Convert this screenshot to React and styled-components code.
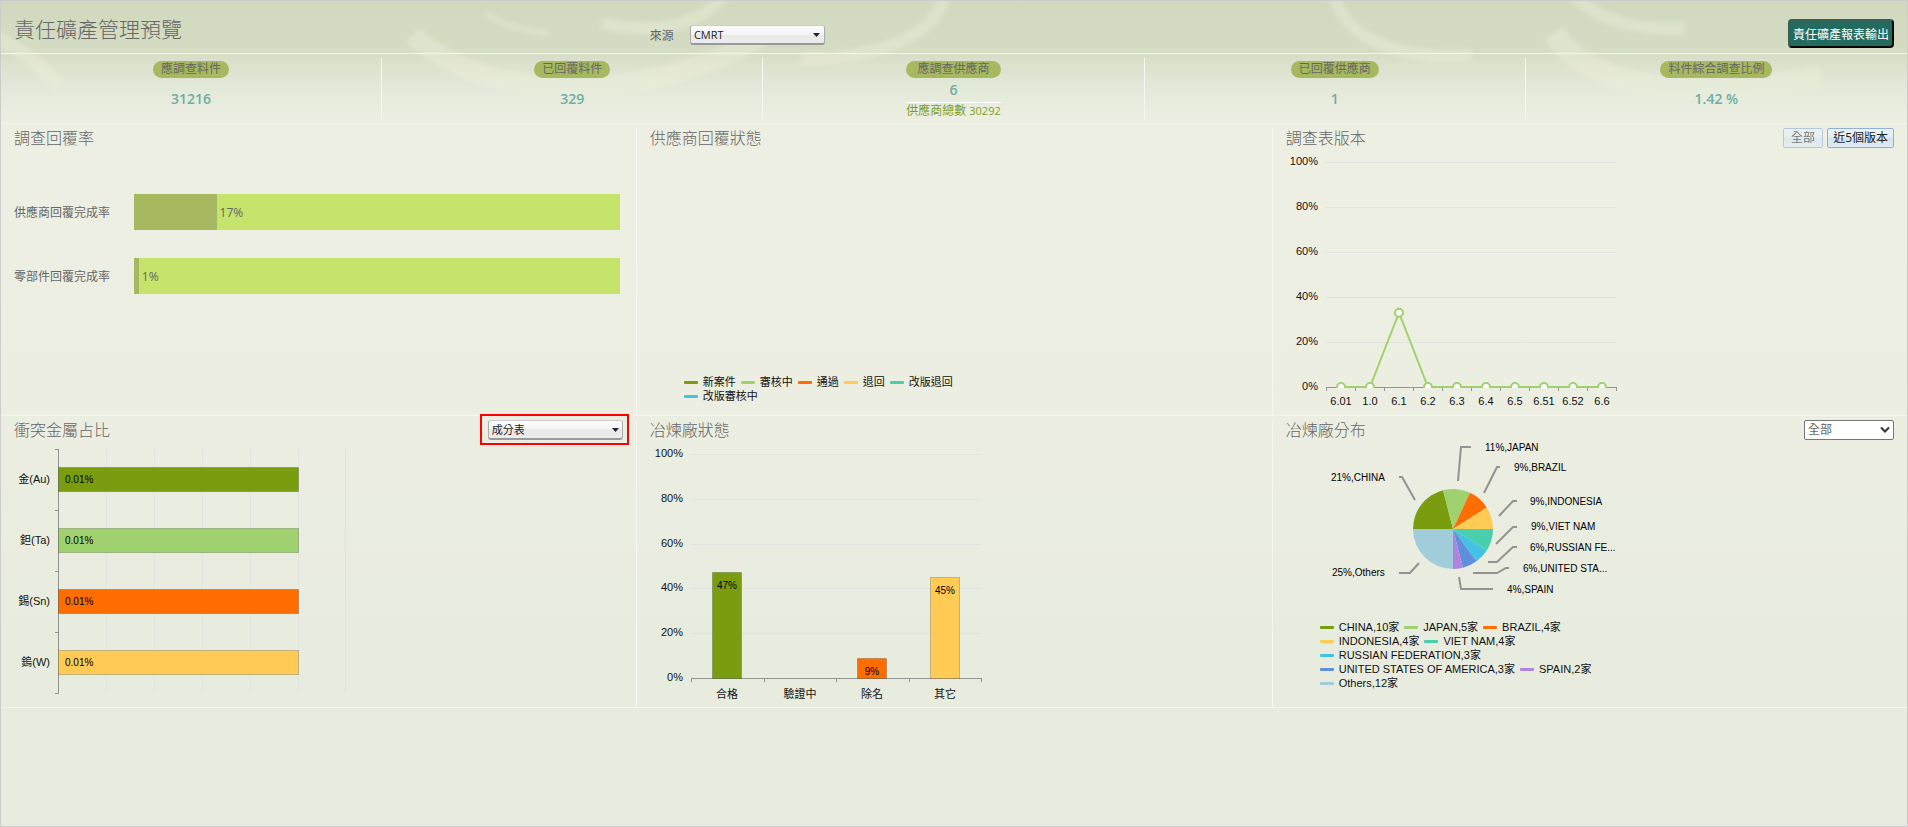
import styled, { createGlobalStyle, css } from "styled-components"

const GlobalStyle = createGlobalStyle`
    * {
        box-sizing: border-box;
    }
    body {
        margin: 0;
        color: #666;
        font-family: "Open Sans", "Noto Sans CJK TC", sans-serif;
        font-size: 12px;
    }
    button, select {
        font-family: inherit;
        font-size: 12px;
    }
`
const Page = styled.div`
    position: relative;
    min-height: 100vh;
    border: 1px solid #ccc;
    background: linear-gradient(
        #d0d9be 0px, #d5dcc4 52px, #dbe0cb 60px, #e2e8d8 85px, #eaeddf 110px,
        #eeefe3 130px, #eeefe3 240px, #ebeee1 400px, #e8ecdf 640px
    );
`
const Swirls = styled.svg`
    position: absolute;
    top: 0;
    left: 0;
    width: 100%;
    height: 122px;
    pointer-events: none;
`
const columns = css`
    display: grid;
    grid-template-columns: 1fr 1fr calc(33.33% - 1px);
`
const Header = styled.header`
    ${columns}
    position: relative;
    align-items: start;
    height: 53px;
    border-bottom: 1px solid #f5f7f0;
`
const Title = styled.h1`
    margin: 0;
    padding-left: 13px;
    font-size: 21px;
    font-weight: 300;
    line-height: 56px;
`
const Source = styled.label`
    display: flex;
    align-items: center;
    gap: 16px;
    padding: 24px 0 0 13px;
`
const ExportButton = styled.button`
    justify-self: end;
    height: 29px;
    margin: 18px 13px 0 0;
    padding: 0 3px;
    border: 2px outset #3d5c56;
    border-radius: 4px;
    color: white;
    background-color: #246b5f;
`
const selectBase = css`
    appearance: none;
    height: 20px;
    padding: 0 3px;
    line-height: 16px;
`
const GlossSelect = styled.select`
    ${selectBase}
    display: block;
    width: 135px;
    border: 1px solid #aaa;
    border-top-color: #ccc;
    border-bottom: 2px solid #999;
    border-radius: 3px;
    color: #222;
    font-size: 11px;
    background: linear-gradient(#fcfcfc, #f4f4f4 50%, #e9e9e9 50%, #ececec);
`
const PlainSelect = styled.select`
    ${selectBase}
    display: block;
    width: 90px;
    border: 1px solid #767676;
    border-radius: 2px;
    color: #666;
    background-color: white;
`
const SelectBox = styled.span`
    position: relative;
    display: block;
    ${props => props.$marked && css`
        padding: 1px 1px 0 3px;
        outline: 2px solid red;
        outline-offset: 3px;
    `}
`
const SelectIcon = styled.svg`
    position: absolute;
    right: 4px;
    bottom: 6px;
    pointer-events: none;
`
const Stats = styled.section`
    position: relative;
    display: grid;
    grid-template-columns: repeat(5, 1fr);
    height: 70px;
    border-bottom: 1px solid #f5f7f0;
`
const Stat = styled.div`
    display: flex;
    justify-content: center;
    margin: 4px 0 3px;
    padding-top: 3px;
    border-right: 1px solid #f5f7f0;
    &:last-child {
        border-right: none;
    }
`
const StatInner = styled.div`
    text-align: center;
`
const Pill = styled.div`
    padding: 0 8px;
    border-radius: 9px;
    line-height: 16px;
    height: 17px;
    background-color: #a6b960;
`
const StatValue = styled.div`
    color: #6fada6;
    font-size: 14px;
    font-weight: 600;
    line-height: ${props => props.$compact ? 24 : 42}px;
`
const StatTotal = styled.div`
    border-top: 1px solid white;
    color: #7d9f1f;
    line-height: 16px;
    span {
        margin-left: 3px;
        font-size: 11px;
    }
`
const Panels = styled.main`
    ${columns}
    position: relative;
`
const Panel = styled.section`
    display: flex;
    flex-direction: column;
    min-height: 292px;
    border-bottom: 1px solid #f5f7f0;
    background: linear-gradient(#f5f7f0, #f5f7f0) no-repeat right 4px / 1px 100%;
    &:nth-child(3n) {
        background: none;
    }
`
const PanelHead = styled.div`
    display: flex;
    justify-content: space-between;
    align-items: flex-start;
    height: 27px;
    padding: 3px 13px 0;
`
const PanelTitle = styled.h2`
    margin: 0;
    font-size: 16px;
    font-weight: 300;
    line-height: 22px;
`
const Actions = styled.div`
    display: flex;
    gap: 4px;
    padding-top: 1px;
`
const SmallButton = styled.button`
    height: 20px;
    padding: 0 5px;
    border: 1px solid #8fb0da;
    border-radius: 2px;
    color: #222;
    font-size: 12px;
    line-height: 16px;
    background: linear-gradient(#eaf2f8, #e2edf5 50%, #d0e3ee 50%, #dfebf5);
    &:disabled {
        padding: 0 7px;
        color: #222;
        opacity: 0.6;
    }
`
const RateList = styled.div`
    display: grid;
    gap: 28px;
    padding: 43px 17px 0 13px;
`
const Rate = styled.div`
    display: grid;
    grid-template-columns: 120px 1fr;
    align-items: center;
`
const Track = styled.div`
    display: flex;
    align-items: center;
    height: 36px;
    background-color: #c6e36c;
`
const Fill = styled.div`
    height: 100%;
    margin-right: 3px;
    background-color: #a6b960;
`
const Chart = styled.svg`
    display: block;
    fill: #111;
    font-family: "Liberation Sans", "Noto Sans CJK TC", sans-serif;
    font-size: 11px;
`
const Legend = styled.ul`
    display: flex;
    flex-wrap: wrap;
    gap: 0 5px;
    width: 292px;
    margin: ${props => props.$bottom ? "auto 0 12px 47px" : "0 0 0 47px"};
    padding: 0;
    list-style: none;
    color: #111;
    font-family: "Liberation Sans", "Noto Sans CJK TC", sans-serif;
    font-size: 11px;
    line-height: 14px;
`
const LegendItem = styled.li`
    display: flex;
    align-items: center;
    gap: 5px;
    height: 14px;
    white-space: nowrap;
    &::before {
        content: "";
        width: 14px;
        height: 3px;
        border-radius: 1px;
        background-color: ${props => props.color};
    }
`

const COLORS = ["#7a9d10", "#9fd26e", "#ff6c00", "#ffcb55", "#4acfae", "#43c2e4", "#5f8fdc", "#ae84dd", "#a1cddb"]

const stats = [
    { label: "應調查料件", value: "31216" },
    { label: "已回覆料件", value: "329" },
    { label: "應調查供應商", value: "6", total: "30292" },
    { label: "已回覆供應商", value: "1" },
    { label: "料件綜合調查比例", value: "1.42 %" },
]
const rates = [
    { label: "供應商回覆完成率", value: 17 },
    { label: "零部件回覆完成率", value: 1 },
]
const replyStates = ["新案件", "審核中", "通過", "退回", "改版退回", "改版審核中"]
const versions = [["6.01", 0], ["1.0", 0], ["6.1", 33], ["6.2", 0], ["6.3", 0], ["6.4", 0], ["6.5", 0], ["6.51", 0], ["6.52", 0], ["6.6", 0]]
const metals = ["金(Au)", "鉭(Ta)", "錫(Sn)", "鎢(W)"]
const smelters = [["合格", 47], ["驗證中", 0], ["除名", 9], ["其它", 45]]
const countries = [
    { name: "CHINA", count: 10, percent: 21, text: "21%,CHINA", x: 60, y: 34, line: "144,57 131,34 128,34" },
    { name: "JAPAN", count: 5, percent: 11, text: "11%,JAPAN", x: 214, y: 4, line: "187,38 190,4 200,4" },
    { name: "BRAZIL", count: 4, percent: 9, text: "9%,BRAZIL", x: 243, y: 24, line: "213,50 226,24 229,24" },
    { name: "INDONESIA", count: 4, percent: 9, text: "9%,INDONESIA", x: 259, y: 58, line: "228,73 242,58 246,58" },
    { name: "VIET NAM", count: 4, percent: 9, text: "9%,VIET NAM", x: 260, y: 83, line: "225,101 242,84 246,84" },
    { name: "RUSSIAN FEDERATION", count: 3, percent: 6, text: "6%,RUSSIAN FE...", x: 259, y: 104, line: "217,119 226,119 242,104 246,104" },
    { name: "UNITED STATES OF AMERICA", count: 3, percent: 6, text: "6%,UNITED STA...", x: 252, y: 125, line: "202,130 226,130 235,125 238,125" },
    { name: "SPAIN", count: 2, percent: 4, text: "4%,SPAIN", x: 236, y: 146, line: "188,134 190,146 222,146" },
    { name: "Others", count: 12, percent: 25, text: "25%,Others", x: 61, y: 129, line: "148,120 139,130 128,130" },
]

function Background() {
    return (
        <Swirls viewBox="0 0 1906 122" preserveAspectRatio="xMidYMin slice">
            <filter id="soft">
                <feGaussianBlur stdDeviation="2" />
            </filter>
            <g filter="url(#soft)" fill="none" stroke="#eef0dc" strokeOpacity="0.4">
                <path d="M722 -6C704 20 664 36 600 22" strokeWidth="12" />
                <path d="M412 34C480 100 640 106 760 36" strokeWidth="20" />
                <path d="M943 -6C938 28 890 58 800 58" strokeWidth="12" />
                <path d="M1334 -6C1340 34 1395 60 1470 54" strokeWidth="12" />
                <path d="M1572 -6C1600 22 1640 30 1684 27" strokeWidth="12" />
                <path d="M1552 32C1585 84 1680 102 1820 76" strokeWidth="22" />
                <path d="M-6 36C20 48 42 64 58 86" strokeWidth="14" />
                <path d="M485 12C500 24 520 30 548 32" strokeWidth="5" />
            </g>
        </Swirls>
    )
}

function Triangle() {
    return (
        <SelectIcon width="8" height="8" viewBox="0 0 8 8">
            <path d="M0 2h7l-3.500 4z" fill="#223" />
        </SelectIcon>
    )
}

function ColumnAxis({ left, top, bottom, count }) {
    const width = 290
    return (
        <g>
            {[0, 20, 40, 60, 80, 100].map(v => {
                const y = Math.round(bottom - (bottom - top) * v / 100)
                return (
                    <g key={v}>
                        {v > 0 && <path d={`M${left} ${y + 0.5}h${width}`} stroke="#e1e3e0" />}
                        <text x={left - 8} y={y + 3} textAnchor="end">{v}%</text>
                    </g>
                )
            })}
            <path d={`M${left} ${bottom + 0.5}h${width}`} stroke="#8e9490" />
            {Array.from({ length: count + 1 }, (_, i) => (
                <path key={i} d={`M${left + Math.round(width / count * i) + 0.5} ${bottom}v4`} stroke="#8e9490" />
            ))}
        </g>
    )
}

function VersionChart() {
    const x = i => 68 + 29 * i
    const y = v => 236 - v * 2.25
    return (
        <Chart width="350" height="262">
            <clipPath id="plot">
                <rect x="53" y="0" width="292" height="237" />
            </clipPath>
            <ColumnAxis left={53} top={11} bottom={236} count={10} />
            <g clipPath="url(#plot)" stroke="#9fd26e" strokeWidth="2">
                <polyline points={versions.map(([, v], i) => `${x(i)},${y(v)}`).join(" ")} fill="none" />
                {versions.map(([name, v], i) => <circle key={name} cx={x(i)} cy={y(v)} r="4" fill="white" />)}
            </g>
            {versions.map(([name], i) => <text key={name} x={x(i)} y="254" textAnchor="middle">{name}</text>)}
        </Chart>
    )
}

function MetalChart() {
    return (
        <Chart width="350" height="262">
            {[105, 153, 201, 249, 297, 344].map(x => <path key={x} d={`M${x + 0.5} 6v244`} stroke="#e0e3e1" />)}
            <path d="M57.500 6v244" stroke="#8e9490" />
            {[0, 1, 2, 3, 4].map(i => <path key={i} d={`M54 ${6.5 + 61 * i}h4`} stroke="#8e9490" />)}
            {metals.map((name, i) => (
                <g key={name}>
                    <text x="49" y={40 + 61 * i} textAnchor="end">{name}</text>
                    <rect x="57.500" y={24.5 + 61 * i} width="240" height="24" fill={COLORS[i]} stroke="#000" strokeOpacity="0.2" />
                    <text x="64" y={40 + 61 * i} fontSize="10" fill="#000">0.01%</text>
                </g>
            ))}
        </Chart>
    )
}

function SmelterChart() {
    return (
        <Chart width="350" height="262">
            <ColumnAxis left={54} top={11} bottom={235} count={4} />
            {smelters.map(([name, v], i) => {
                const center = Math.round(90 + 72.5 * i)
                const height = Math.round(v * 2.25)
                return (
                    <g key={name}>
                        {v > 0 && <rect x={center - 14.5} y={235.5 - height} width="29" height={height} fill={COLORS[i]} stroke="#000" strokeOpacity="0.2" />}
                        {v > 0 && <text x={center} y={252 - height} fontSize="10" fill="#000" textAnchor="middle">{v}%</text>}
                        <text x={center} y="255" textAnchor="middle">{name}</text>
                    </g>
                )
            })}
        </Chart>
    )
}

function CountryChart() {
    const cx = 182
    const cy = 86
    const r = 40
    const point = p => {
        const a = Math.PI + p / 100 * Math.PI * 2
        return `${cx + r * Math.cos(a)} ${cy + r * Math.sin(a)}`
    }
    let sum = 0
    return (
        <Chart width="350" height="177" viewBox="2 0 350 177">
            {countries.map((c, i) => {
                const from = sum
                sum += c.percent
                return (
                    <g key={c.name}>
                        <path d={`M${cx} ${cy}L${point(from)}A${r} ${r} 0 0 1 ${point(sum)}Z`} fill={COLORS[i]} />
                        <polyline points={c.line} fill="none" stroke="#939393" strokeWidth="2" />
                        <text x={c.x} y={c.y + 4} fontSize="10" fill="#000">{c.text}</text>
                    </g>
                )
            })}
        </Chart>
    )
}

function App() {
    return (
        <>
            <GlobalStyle />
            <Page>
                <Background />
                <Header>
                    <Title>責任礦產管理預覽</Title>
                    <Source>
                        來源
                        <SelectBox>
                            <GlossSelect>
                                <option>CMRT</option>
                            </GlossSelect>
                            <Triangle />
                        </SelectBox>
                    </Source>
                    <ExportButton>責任礦產報表輸出</ExportButton>
                </Header>
                <Stats>
                    {stats.map(s => (
                        <Stat key={s.label}>
                            <StatInner>
                                <Pill>{s.label}</Pill>
                                <StatValue $compact={!!s.total}>{s.value}</StatValue>
                                {s.total && <StatTotal>供應商總數<span>{s.total}</span></StatTotal>}
                            </StatInner>
                        </Stat>
                    ))}
                </Stats>
                <Panels>
                    <Panel>
                        <PanelHead>
                            <PanelTitle>調查回覆率</PanelTitle>
                        </PanelHead>
                        <RateList>
                            {rates.map(r => (
                                <Rate key={r.label}>
                                    <span>{r.label}</span>
                                    <Track>
                                        <Fill style={{ width: `${r.value}%` }} />
                                        {r.value}%
                                    </Track>
                                </Rate>
                            ))}
                        </RateList>
                    </Panel>
                    <Panel>
                        <PanelHead>
                            <PanelTitle>供應商回覆狀態</PanelTitle>
                        </PanelHead>
                        <Legend $bottom>
                            {replyStates.map((name, i) => <LegendItem key={name} color={COLORS[i]}>{name}</LegendItem>)}
                        </Legend>
                    </Panel>
                    <Panel>
                        <PanelHead>
                            <PanelTitle>調查表版本</PanelTitle>
                            <Actions>
                                <SmallButton disabled>全部</SmallButton>
                                <SmallButton>近5個版本</SmallButton>
                            </Actions>
                        </PanelHead>
                        <VersionChart />
                    </Panel>
                    <Panel>
                        <PanelHead>
                            <PanelTitle>衝突金屬占比</PanelTitle>
                            <SelectBox $marked>
                                <GlossSelect aria-label="衝突金屬占比">
                                    <option>成分表</option>
                                </GlossSelect>
                                <Triangle />
                            </SelectBox>
                        </PanelHead>
                        <MetalChart />
                    </Panel>
                    <Panel>
                        <PanelHead>
                            <PanelTitle>冶煉廠狀態</PanelTitle>
                        </PanelHead>
                        <SmelterChart />
                    </Panel>
                    <Panel>
                        <PanelHead>
                            <PanelTitle>冶煉廠分布</PanelTitle>
                            <Actions>
                                <SelectBox>
                                    <PlainSelect aria-label="冶煉廠分布">
                                        <option>全部</option>
                                    </PlainSelect>
                                    <SelectIcon width="10" height="8" viewBox="0 0 10 8">
                                        <path d="M1 1.500l4 4 4-4" fill="none" stroke="#333" strokeWidth="2" />
                                    </SelectIcon>
                                </SelectBox>
                            </Actions>
                        </PanelHead>
                        <CountryChart />
                        <Legend>
                            {countries.map((c, i) => (
                                <LegendItem key={c.name} color={COLORS[i]}>{c.name},{c.count}家</LegendItem>
                            ))}
                        </Legend>
                    </Panel>
                </Panels>
            </Page>
        </>
    )
}

export default App
